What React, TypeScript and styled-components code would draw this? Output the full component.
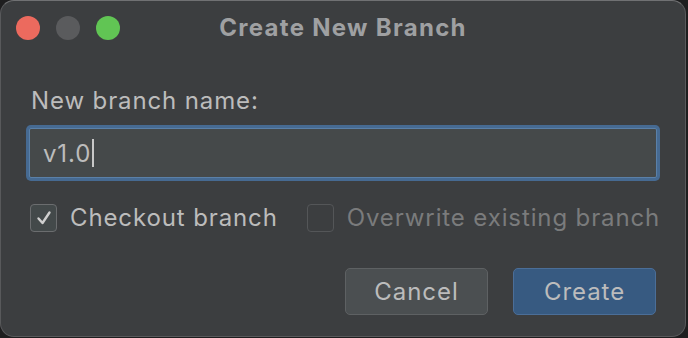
import React from "react";
import styled, { createGlobalStyle } from "styled-components";

const Global = createGlobalStyle`
  html, body { margin: 0; padding: 0; background: #1e1e1f; }
  body { width: 688px; height: 338px; overflow: hidden; font-family: Inter, "Liberation Sans", sans-serif; }
  * { box-sizing: border-box; }
`;

const Window = styled.div`
  width: 686px;
  height: 337px;
  background: #3c3e40;
  border: 1px solid #58595b;
  border-top-color: #707173;
  border-radius: 14px;
  display: flex;
  flex-direction: column;
  overflow: hidden;
`;

const TitleBar = styled.div`
  flex-shrink: 0;
  height: 53px;
  display: grid;
  grid-template-columns: 1fr auto 1fr;
  align-items: center;
  padding: 0 15px;
`;

const Lights = styled.div`
  display: flex;
  gap: 16px;
`;

const Light = styled.span<{ $c: string }>`
  width: 24px;
  height: 24px;
  border-radius: 50%;
  background: ${(p) => p.$c};
`;

const Title = styled.div`
  font-size: 24px;
  font-weight: 700;
  color: #9fa0a2;
  letter-spacing: 1.3px;
  white-space: nowrap;
`;

const Body = styled.div`
  flex: 1;
  display: flex;
  flex-direction: column;
  padding: 33px 28px 0 28px;
  font-size: 24px;
  letter-spacing: 0.88px;
  white-space: nowrap;
`;

const Label = styled.div`
  line-height: 28px;
  color: #bcbcbc;
  padding-left: 2px;
`;

const Input = styled.div`
  margin-top: 13px;
  height: 50px;
  flex-shrink: 0;
  background: #45494a;
  border: 1px solid #5a80a8;
  box-shadow: 0 0 0 3px #466a92;
  border-radius: 2px;
  display: flex;
  align-items: center;
  padding-left: 13px;
  color: #bcbcbc;
`;

const Caret = styled.span`
  display: inline-block;
  width: 2px;
  height: 28px;
  background: #c8c8c8;
  margin-left: 1px;
`;

const CheckRow = styled.div`
  margin-top: 25px;
  display: flex;
  align-items: center;
  padding-left: 1px;
`;

const CheckItem = styled.label<{ $disabled?: boolean }>`
  display: flex;
  align-items: center;
  flex-shrink: 0;
  gap: 13px;
  color: ${(p) => (p.$disabled ? "#7a7b7c" : "#bcbcbc")};
  & + & { margin-left: 29px; }
`;

const Box = styled.span<{ $disabled?: boolean }>`
  flex-shrink: 0;
  width: 27px;
  height: 28px;
  border-radius: 4px;
  border: 1.5px solid ${(p) => (p.$disabled ? "#545658" : "#6b6d6f")};
  background: ${(p) => (p.$disabled ? "#3c3e40" : "#43494a")};
  display: flex;
  align-items: center;
  justify-content: center;
`;

const Buttons = styled.div`
  margin-top: 36px;
  display: flex;
  justify-content: flex-end;
  gap: 25px;
  padding-right: 1px;
`;

const Button = styled.button<{ $primary?: boolean }>`
  width: 143px;
  height: 47px;
  border-radius: 5px;
  border: 1.5px solid ${(p) => (p.$primary ? "#4b6e98" : "#5e6163")};
  background: ${(p) => (p.$primary ? "#375a81" : "#4b4f51")};
  color: #bcbcbc;
  font-family: inherit;
  font-size: 24px;
  letter-spacing: 0.95px;
  padding: 0;
`;

export default function App() {
  return (
    <>
      <Global />
      <Window>
        <TitleBar>
          <Lights>
            <Light $c="#ec6a5e" />
            <Light $c="#5a5b5d" />
            <Light $c="#61c554" />
          </Lights>
          <Title>Create New Branch</Title>
          <div />
        </TitleBar>
        <Body>
          <Label>New branch name:</Label>
          <Input>
            v1.0
            <Caret />
          </Input>
          <CheckRow>
            <CheckItem>
              <Box>
                <svg width="18" height="18" viewBox="0 0 18 18">
                  <path d="M3.5 9.5 L7.5 14 L14.5 3.5" fill="none" stroke="#cfcfcf" strokeWidth="2.4" strokeLinecap="round" strokeLinejoin="round" />
                </svg>
              </Box>
              Checkout branch
            </CheckItem>
            <CheckItem $disabled>
              <Box $disabled />
              Overwrite existing branch
            </CheckItem>
          </CheckRow>
          <Buttons>
            <Button>Cancel</Button>
            <Button $primary>Create</Button>
          </Buttons>
        </Body>
      </Window>
    </>
  );
}
